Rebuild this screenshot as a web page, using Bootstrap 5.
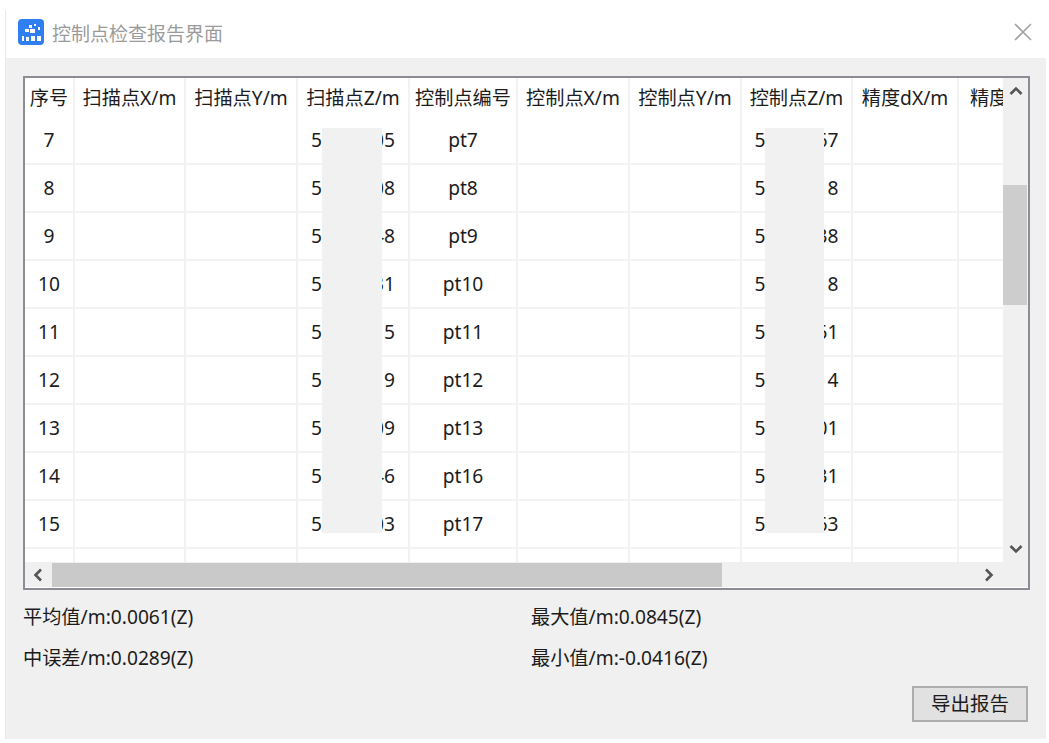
<!DOCTYPE html>
<html lang="zh-CN">
<head>
<meta charset="utf-8">
<title>控制点检查报告界面</title>
<link href="https://cdn.jsdelivr.net/npm/bootstrap@5.3.0/dist/css/bootstrap.min.css" rel="stylesheet">
<style>
html,body{background:#fff;overflow:hidden}
body{width:1049px;height:743px;font-family:"Noto Sans","Noto Sans CJK SC",sans-serif;color:#1c1c1c;font-size:19.2px}
.dlg{margin-left:5px;margin-top:10px;width:1041px;height:729px;border-left:1px solid #eee6e6}
.dlg-bar{height:48px;padding:0 13px 4px 12px}
.dlg-title{color:#9b9b9b;font-size:19px;margin-left:8px;line-height:26px;padding-top:4px}
.dlg-body{height:681px;background:#f0f0f0;padding:18px 0 0 17px}
.frame{width:1007px;height:514px;border:2px solid #8c8c94;background:#fff}
.view{width:978px;height:484px;border-radius:0 0 4px 0}
.grid{table-layout:fixed;width:1044px;border-collapse:separate;border-spacing:0;background:#fff;font-size:19.2px;margin:0}
.grid th,.grid td{padding:0;border:0;border-right:2px solid #f2f2f2;border-bottom:2px solid #f2f2f2;text-align:center;vertical-align:middle;white-space:nowrap;font-weight:400;color:#1c1c1c;line-height:1.2;overflow:hidden}
.grid th{height:39px;border-bottom:0}
.grid td{height:48px}
.grid th:nth-child(1){width:50px}
.grid th:nth-child(2){width:111px}
.grid th:nth-child(3),.grid th:nth-child(4){width:112px}
.grid th:nth-child(5){width:108px}
.grid th:nth-child(6),.grid th:nth-child(7){width:112px}
.grid th:nth-child(8){width:111px}
.grid th:nth-child(9){width:106px}
.grid th:nth-child(10){width:110px}
.gap-digits{display:inline-block;width:51px}
.mask{position:absolute;top:50px;height:405px;background:#f1f1f1}
.mask-a{left:297px;width:60px}
.mask-b{left:740px;width:59px}
.vbar{width:25px;height:484px;background:#f0f0f0}
.sb-btn{height:26px;width:25px}
.vthumb{width:24px;height:120px;background:#cdcdcd;margin-top:81px}
.hbar{height:25px;background:#f0f0f0;width:1003px}
.hbar .sb-btn{width:26px;height:25px;flex:none}
.hbar .sb-end{margin-right:26px}
.hthumb{width:670px;height:24px;background:#c9c9c9;margin:1px 0 0 1px}
.stats{display:grid;grid-template-columns:508px 1fr;width:1016px;margin-top:15px;row-gap:17px;font-size:19.2px;line-height:24px}
.export{width:116px;height:36px;margin:16px 18px 0 0;padding:0;background:#e1e1e1;border:2px solid #adadad;border-radius:0;font-size:19.5px;line-height:1;color:#1c1c1c}
</style>
</head>
<body>
<div class="dlg">
  <div class="dlg-bar d-flex align-items-center">
    <svg width="26" height="26" viewBox="0 0 26 26" aria-hidden="true"><rect width="26" height="26" rx="4" fill="#2f7ff1"/><g fill="#fff"><rect x="11" y="6" width="3" height="3"/><rect x="16" y="5" width="2" height="2"/><rect x="7" y="10" width="4" height="3"/><rect x="12" y="10" width="5" height="4"/><rect x="20" y="8" width="2" height="3"/><rect x="4" y="17" width="2" height="5"/><rect x="8" y="18" width="3" height="4"/><rect x="13" y="17" width="4" height="5"/><rect x="19" y="17" width="4" height="5"/></g></svg>
    <span class="dlg-title">控制点检查报告界面</span>
    <svg class="ms-auto" width="20" height="20" viewBox="0 0 20 20" aria-label="关闭"><path d="M2 2 18 18M18 2 2 18" stroke="#a3a3a3" stroke-width="1.6" fill="none"/></svg>
  </div>
  <div class="dlg-body">
    <div class="frame d-flex flex-column">
      <div class="d-flex">
        <div class="view position-relative overflow-hidden">
          <table class="grid">
            <thead><tr><th>序号</th><th>扫描点X/m</th><th>扫描点Y/m</th><th>扫描点Z/m</th><th>控制点编号</th><th>控制点X/m</th><th>控制点Y/m</th><th>控制点Z/m</th><th>精度dX/m</th><th>精度dY/m</th></tr></thead>
            <tbody>
              <tr><td>7</td><td></td><td></td><td>5<span class="gap-digits"></span>05</td><td>pt7</td><td></td><td></td><td>5<span class="gap-digits"></span>67</td><td></td><td></td></tr>
              <tr><td>8</td><td></td><td></td><td>5<span class="gap-digits"></span>08</td><td>pt8</td><td></td><td></td><td>5<span class="gap-digits"></span>18</td><td></td><td></td></tr>
              <tr><td>9</td><td></td><td></td><td>5<span class="gap-digits"></span>48</td><td>pt9</td><td></td><td></td><td>5<span class="gap-digits"></span>38</td><td></td><td></td></tr>
              <tr><td>10</td><td></td><td></td><td>5<span class="gap-digits"></span>31</td><td>pt10</td><td></td><td></td><td>5<span class="gap-digits"></span>18</td><td></td><td></td></tr>
              <tr><td>11</td><td></td><td></td><td>5<span class="gap-digits"></span>15</td><td>pt11</td><td></td><td></td><td>5<span class="gap-digits"></span>51</td><td></td><td></td></tr>
              <tr><td>12</td><td></td><td></td><td>5<span class="gap-digits"></span>19</td><td>pt12</td><td></td><td></td><td>5<span class="gap-digits"></span>14</td><td></td><td></td></tr>
              <tr><td>13</td><td></td><td></td><td>5<span class="gap-digits"></span>09</td><td>pt13</td><td></td><td></td><td>5<span class="gap-digits"></span>01</td><td></td><td></td></tr>
              <tr><td>14</td><td></td><td></td><td>5<span class="gap-digits"></span>46</td><td>pt16</td><td></td><td></td><td>5<span class="gap-digits"></span>31</td><td></td><td></td></tr>
              <tr><td>15</td><td></td><td></td><td>5<span class="gap-digits"></span>03</td><td>pt17</td><td></td><td></td><td>5<span class="gap-digits"></span>63</td><td></td><td></td></tr>
              <tr><td></td><td></td><td></td><td></td><td></td><td></td><td></td><td></td><td></td><td></td></tr>
            </tbody>
          </table>
          <div class="mask mask-a"></div>
          <div class="mask mask-b"></div>
        </div>
        <div class="vbar d-flex flex-column">
          <div class="sb-btn d-flex align-items-center justify-content-center"><svg width="14" height="10" viewBox="0 0 14 10"><path d="M1.5 8 7 2.5 12.5 8" stroke="#555" stroke-width="2.6" fill="none"/></svg></div>
          <div class="vthumb"></div>
          <div class="sb-btn d-flex align-items-center justify-content-center mt-auto"><svg width="14" height="10" viewBox="0 0 14 10"><path d="M1.5 2 7 7.5 12.5 2" stroke="#555" stroke-width="2.6" fill="none"/></svg></div>
        </div>
      </div>
      <div class="hbar d-flex">
        <div class="sb-btn d-flex align-items-center justify-content-center"><svg width="10" height="14" viewBox="0 0 10 14"><path d="M8 1.5 2.5 7 8 12.5" stroke="#555" stroke-width="2.6" fill="none"/></svg></div>
        <div class="hthumb"></div>
        <div class="sb-btn sb-end d-flex align-items-center justify-content-center ms-auto"><svg width="10" height="14" viewBox="0 0 10 14"><path d="M2 1.5 7.5 7 2 12.5" stroke="#555" stroke-width="2.6" fill="none"/></svg></div>
      </div>
    </div>
    <div class="stats">
      <div>平均值/m:0.0061(Z)</div><div>最大值/m:0.0845(Z)</div>
      <div>中误差/m:0.0289(Z)</div><div>最小值/m:-0.0416(Z)</div>
    </div>
    <div class="d-flex justify-content-end"><button type="button" class="btn export">导出报告</button></div>
  </div>
</div>
<script src="https://cdn.jsdelivr.net/npm/bootstrap@5.3.0/dist/js/bootstrap.bundle.min.js"></script>
</body>
</html>
